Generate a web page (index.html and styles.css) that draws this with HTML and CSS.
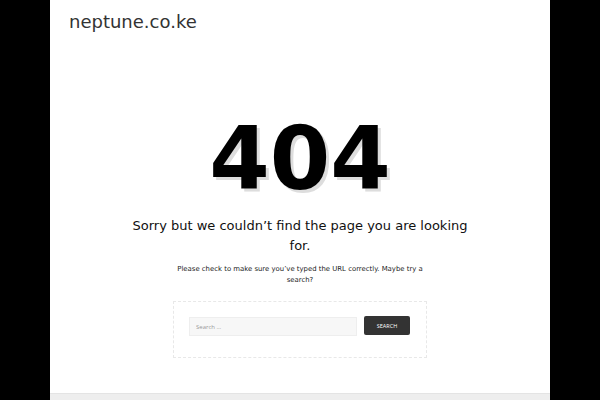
FILE: index.html
```html
<!DOCTYPE html>
<html lang="en">
<head>
    <meta charset="UTF-8">
    <meta name="viewport" content="width=device-width, initial-scale=1.0">
    <title>Page not found – neptune.co.ke</title>
    <link rel="stylesheet" href="styles.css">
</head>
<body>
    <div class="site">
        <header class="site-header">
            <a class="site-title" href="#">neptune.co.ke</a>
        </header>

        <main class="error-404">
            <h1 class="error-code">404</h1>
            <h2 class="error-title">Sorry but we couldn’t find the page you are looking for.</h2>
            <p class="error-text">Please check to make sure you’ve typed the URL correctly. Maybe try a search?</p>

            <div class="search-box">
                <form class="search-form" onsubmit="return false">
                    <input type="search" class="search-field" placeholder="Search …">
                    <button type="submit" class="search-submit">Search</button>
                </form>
            </div>
        </main>

        <footer class="site-footer"></footer>
    </div>
</body>
</html>
```

FILE: styles.css
```css
html, body {
    height: 100%;
}
body {
    margin: 0;
    background: #000;
    font-family: "DejaVu Sans", sans-serif;
    color: #333;
}
.site {
    width: 500px;
    min-height: 100%;
    margin: 0 auto;
    background: #fff;
    display: flex;
    flex-direction: column;
}
.site-header {
    padding: 11px 19px 0;
}
.site-title {
    font-size: 18px;
    color: #333;
    text-decoration: none;
}
.error-404 {
    flex: 1;
    text-align: center;
    padding-top: 84px;
}
.error-code {
    margin: 0;
    font-size: 87px;
    line-height: 1;
    font-weight: bold;
    color: #000;
    text-shadow: 3px 3px 0 #ddd;
}
.error-title {
    margin: 13px auto 0;
    width: 350px;
    font-size: 13px;
    font-weight: normal;
    line-height: 20px;
    color: #111;
}
.error-text {
    margin: 8px auto 0;
    width: 260px;
    font-size: 6.9px;
    line-height: 11px;
    color: #222;
}
.search-box {
    width: 221px;
    margin: 15px auto 0;
    padding: 14px 16px 21px 15px;
    border: 1px dashed #e8e8e8;
}
.search-form {
    display: flex;
    align-items: flex-start;
    gap: 7px;
}
.search-field {
    flex: 1;
    min-width: 0;
    height: 19px;
    box-sizing: border-box;
    border: 1px solid #eee;
    background: #f7f7f7;
    padding: 0 6px;
    font-family: "Open Sans", sans-serif;
    font-size: 6px;
    color: #666;
    margin-top: 1px;
}
.search-field::placeholder {
    color: #999;
}
.search-submit {
    flex: none;
    width: 46px;
    height: 19px;
    border: none;
    border-radius: 2px;
    background: #333;
    color: #fff;
    font-family: "Open Sans", sans-serif;
    font-size: 5.5px;
    text-transform: uppercase;
}
.site-footer {
    height: 6px;
    background: #eee;
    border-top: 1px solid #e4e4e4;
}
```
